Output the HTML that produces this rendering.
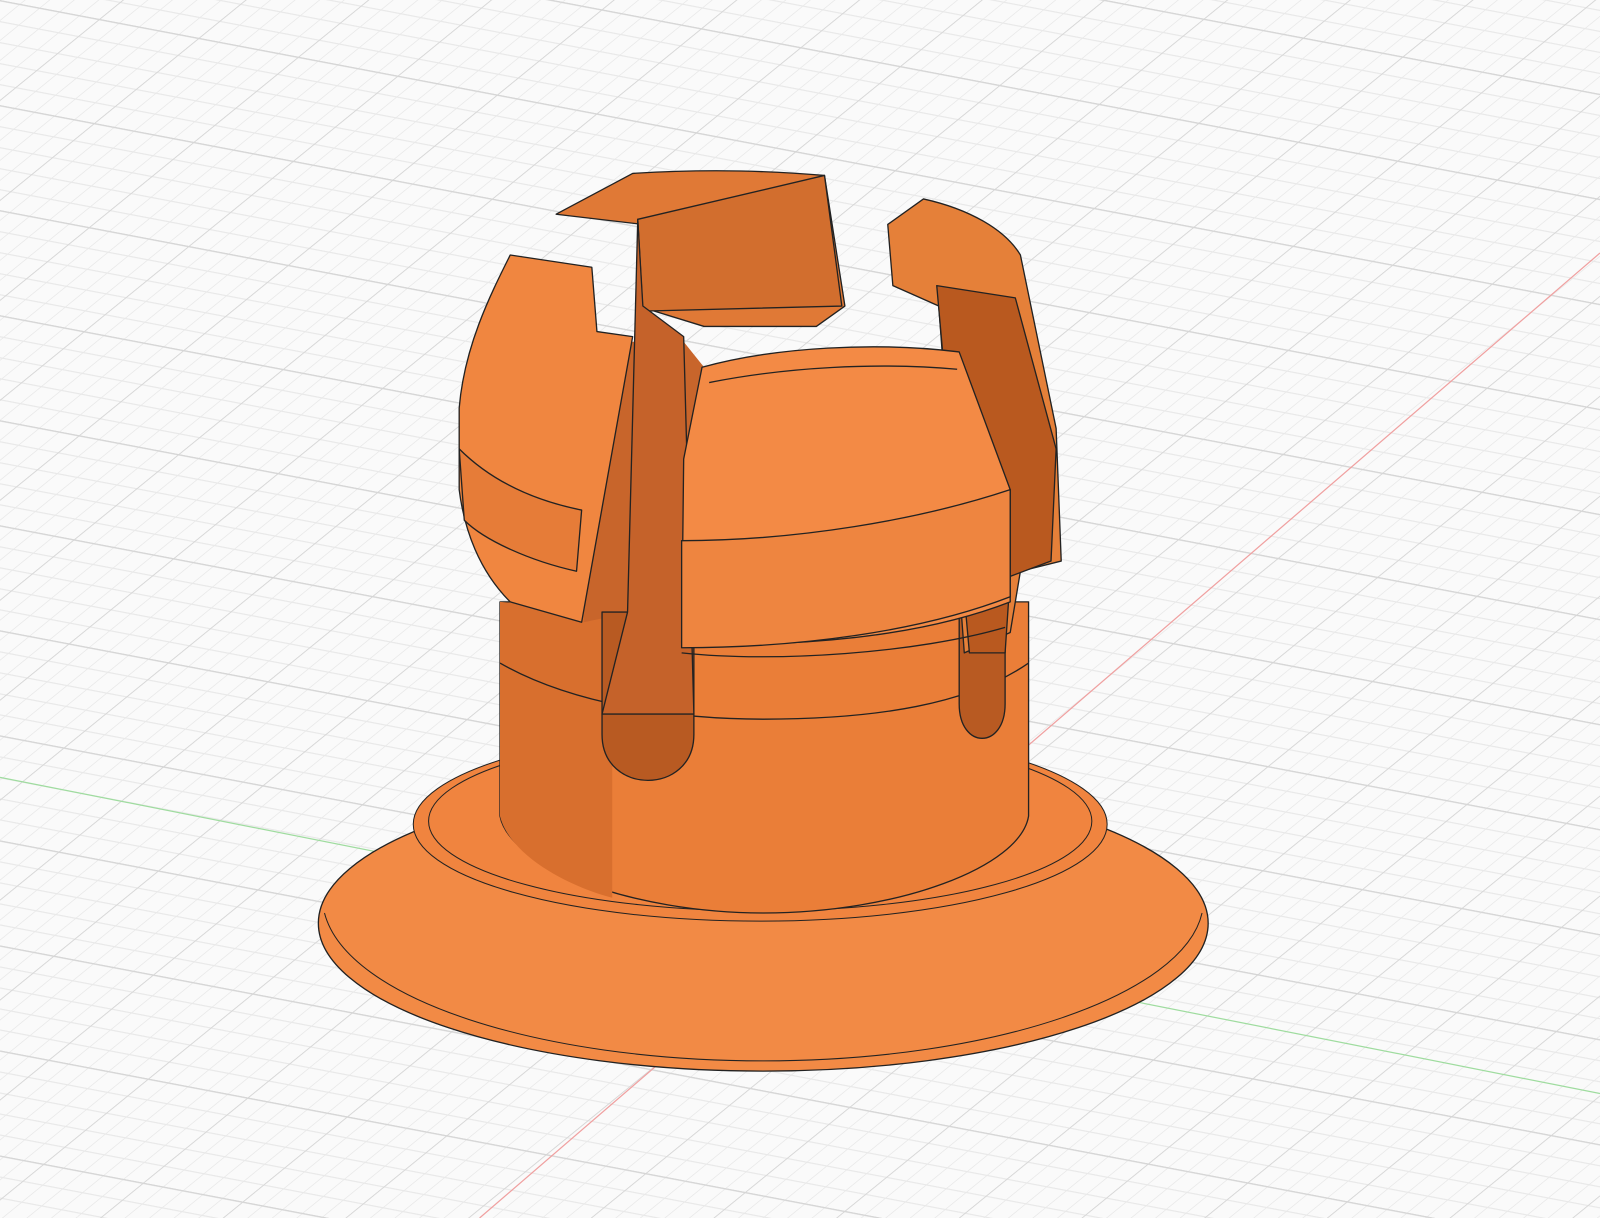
<!DOCTYPE html>
<html><head><meta charset="utf-8"><style>
html,body{margin:0;padding:0;background:#fafafa;overflow:hidden}
svg{display:block}
</style></head><body>
<svg width="1600" height="1218" viewBox="0 0 1568 1194" preserveAspectRatio="none" xmlns="http://www.w3.org/2000/svg">
<defs>
<pattern id="minor" patternUnits="userSpaceOnUse" width="19.5" height="16.7" patternTransform="matrix(1,0.19,-1.227,1,0,0)">
<path d="M0 0.5H19.5M0.5 0V16.7" stroke="#e9e9e9" stroke-width="1" fill="none"/>
</pattern>
<pattern id="major" patternUnits="userSpaceOnUse" width="97.5" height="83.5" patternTransform="matrix(1,0.19,-1.227,1,0,0)">
<path d="M0 0.5H97.5M0.5 0V83.5" stroke="#d6d6d6" stroke-width="1.2" fill="none"/>
</pattern>
</defs>
<rect width="1568" height="1194" fill="#fafafa"/>
<rect width="1568" height="1194" fill="url(#minor)"/>
<rect width="1568" height="1194" fill="url(#major)"/>
<line x1="0" y1="762" x2="1568" y2="1072" stroke="#9fdc9f" stroke-width="1.2"/>
<line x1="470" y1="1194" x2="1568" y2="248" stroke="#f0a0a0" stroke-width="1.2"/>
<g stroke="#222" stroke-width="1.3" stroke-linejoin="round">
<ellipse cx="748" cy="905" rx="436" ry="145" fill="#f28a45"/>
<path d="M318 895 C340 980 530 1040 748 1040 C975 1040 1160 975 1178 895" fill="none" stroke-width="1"/>
<ellipse cx="745" cy="808" rx="340" ry="95" fill="#f0843f" stroke-width="1"/>
<ellipse cx="745" cy="805" rx="325" ry="88" fill="none" stroke-width="1"/>
<path d="M490 590 L490 800 C500 850 620 895 748 895 C880 895 1000 850 1008 800 L1008 590 Z" fill="#ea7e38"/>
<path d="M490 590 L490 800 C500 840 560 870 600 880 L600 600Z" fill="#d86f2e" stroke="none"/>
<path d="M490 650 C560 690 660 705 748 705 C860 705 950 690 1008 650" fill="none"/>
<path d="M578 335 L670 335 L690 360 L990 480 L990 600 L620 600 L572 610Z" fill="#c8652b" stroke="none"/>
<path d="M590 600 L590 720 C590 780 680 780 680 720 L680 600 Z" fill="#b85a22"/>
<path d="M940 600 L940 690 C940 735 985 735 985 690 L985 600 Z" fill="#b85a22"/>
<path d="M500 250 L580 262 L585 325 L620 330 L570 610 L500 590 C470 560 455 520 450 480 L450 400 C455 340 480 290 500 250Z" fill="#f08640"/>
<path d="M450 440 C480 470 520 490 570 500 L565 560 C520 550 475 530 455 510Z" fill="#e67c38"/>
<path d="M545 210 L620 170 C700 165 760 168 808 172 L828 300 L800 320 L690 320 L625 300 L630 220Z" fill="#e07936"/>
<path d="M625 215 L808 172 L825 300 L630 305Z" fill="#d26e2e"/>
<path d="M625 215 L615 600 L590 700 L680 700 L670 330 L630 300Z" fill="#c5622a"/>
<path d="M870 220 L905 195 C950 205 985 225 1000 250 L1035 420 L1040 550 L1000 560 L990 620 L945 640 L920 300 L875 280Z" fill="#e58039"/>
<path d="M918 280 L995 292 L1035 440 L1030 550 L990 565 L985 640 L950 640Z" fill="#b9591f"/>
<path d="M688 360 C760 340 860 335 940 345 L990 480 L990 590 C900 625 780 635 668 630 L670 450 Z" fill="#f38a45"/>
<path d="M668 530 C780 530 900 510 990 480 L990 585 C900 620 780 635 668 635Z" fill="#ee8540"/>
<path d="M695 375 C770 360 860 355 938 362" fill="none"/>
<path d="M668 640 C760 650 900 640 985 615" fill="none"/>
</g>
</svg>
</body></html>
